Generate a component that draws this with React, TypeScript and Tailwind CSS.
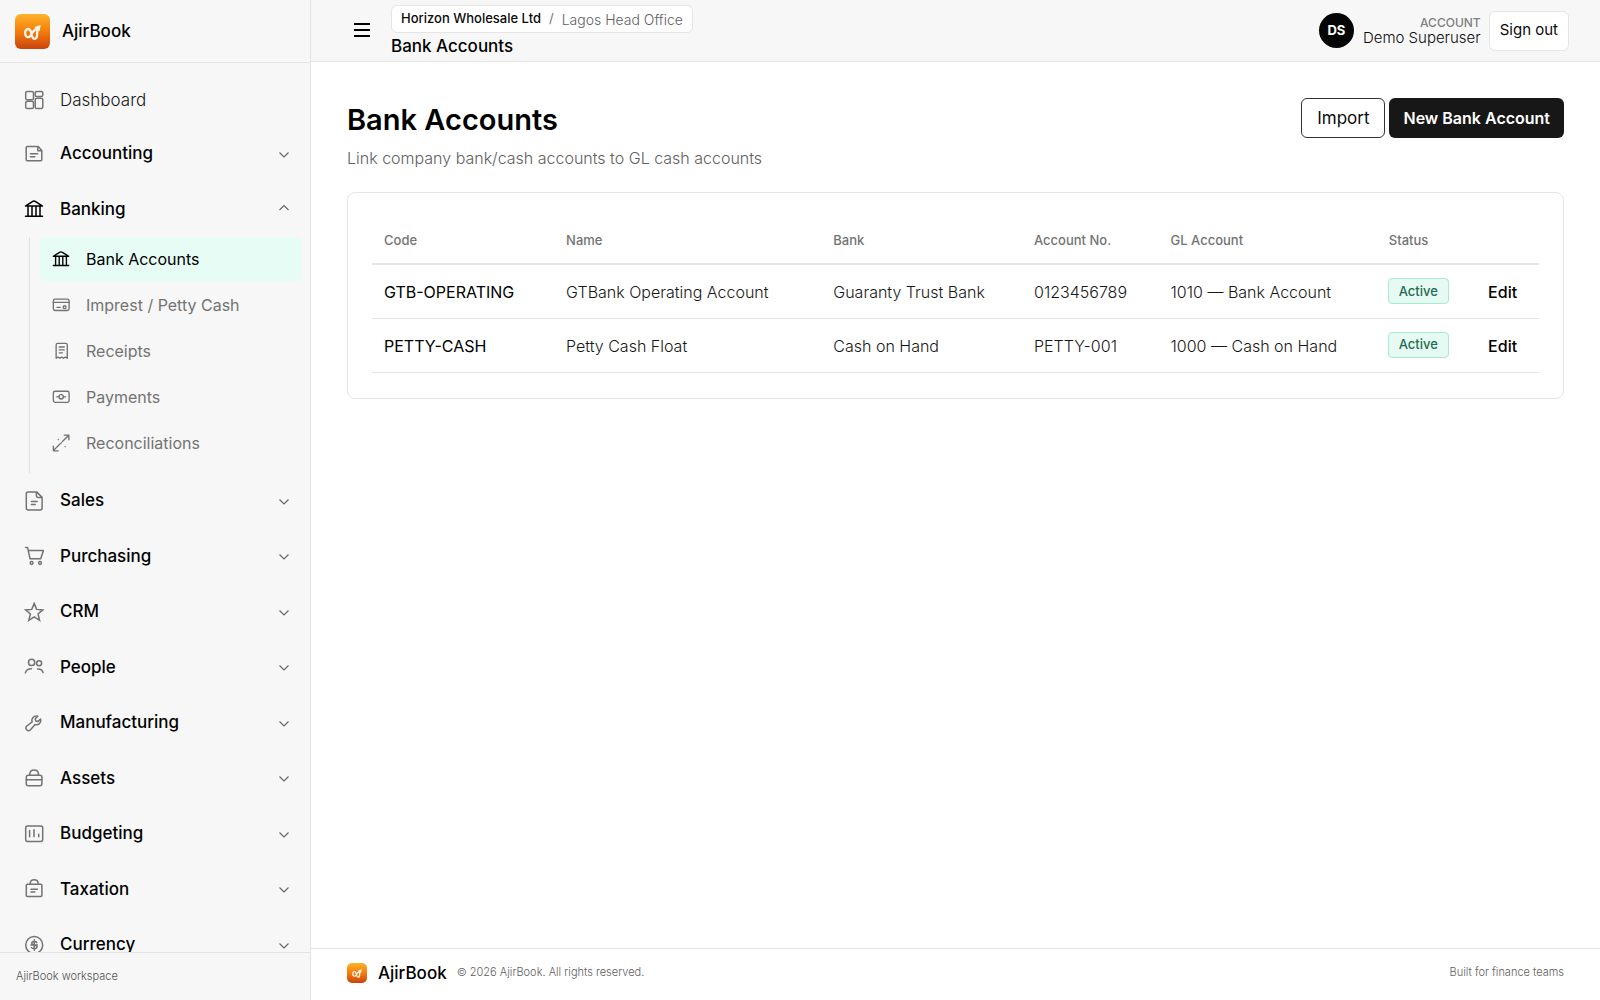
import type { ReactNode } from "react";

function Icon({ children, small }: { children: ReactNode; small?: boolean }) {
  return (
    <svg
      viewBox="0 0 20 20"
      className={small ? "size-[18px] shrink-0" : "size-5 shrink-0"}
      fill="none"
      stroke="currentColor"
      strokeWidth="1.5"
      strokeLinecap="round"
      strokeLinejoin="round"
      aria-hidden="true"
    >
      {children}
    </svg>
  );
}

const icons: Record<string, ReactNode> = {
  dashboard: (
    <>
      <rect x="1.7" y="1.5" width="7.8" height="8.3" rx="1.6" />
      <rect x="1.7" y="11.2" width="7.8" height="7.3" rx="1.6" />
      <rect x="11.2" y="1.5" width="7.6" height="5" rx="1.6" />
      <rect x="11.2" y="8.2" width="7.6" height="10.3" rx="1.6" />
    </>
  ),
  accounting: (
    <path d="M14.2 2.6H3.2q-1 0-1 1v12.2q0 1 1 1h13.6q1 0 1-1V6.4zM13.8 2.9v3.8h3.8M6.4 9.7h7.2M6.4 12.7h4.4" />
  ),
  bank: (
    <path d="M1.8 6.8 8.4 2.6Q10 1.6 11.6 2.6L18.2 6.8M1.5 6.9h17M1.5 17.2h17M4 7v10M8 7v10M12 7v10M16 7v10" />
  ),
  sales: (
    <path d="M12.6 .9H4.2Q2.3 .9 2.3 2.8v14.2q0 1.9 1.9 1.9h12q1.9 0 1.9-1.9V6.4zM12.4 1.2v3.6q0 1.6 1.6 1.6h3.8M7.4 10.4h5.8M7.4 13.5h3.8" />
  ),
  purchasing: (
    <>
      <path d="M1.6 1.6h2l2.5 11.2h10.6L19.4 4.6H4.4" />
      <circle cx="7.6" cy="17" r="1.4" />
      <circle cx="16" cy="17" r="1.4" />
    </>
  ),
  crm: <path d="m10.2 1.4 2.4 6 6.2.5-4.8 4 1.6 6.4-5.4-3.4-5.4 3.4 1.6-6.4-4.8-4 6.2-.5z" strokeLinejoin="miter" />,
  people: (
    <>
      <circle cx="7.6" cy="5.4" r="3.1" />
      <circle cx="15.1" cy="6.2" r="2.5" />
      <path d="M1.4 15.8q1-4 6-4.1M13.6 12q4.4-.2 5.5 3.6" />
    </>
  ),
  manufacturing: (
    <path d="M13.8 3.3a4.3 4.3 0 0 0-5.6 5.5L2.8 13a2.6 2.6 0 0 0 3.7 3.8l4.6-5.3a4.3 4.3 0 0 0 5.4-5.5l-2.5 2.4-2.3-.5-.5-2.2z" />
  ),
  assets: (
    <>
      <rect x="2.3" y="7.3" width="15.6" height="10.5" rx="2" />
      <path d="M2.3 11.7h15.6M5.8 7V5.7q.4-3.8 4.3-3.8T14.4 5.7V7" />
    </>
  ),
  budgeting: (
    <>
      <rect x="1.7" y="2" width="17" height="15.4" rx="1.8" />
      <path d="M5.6 6.4v6.4M10 5.8v7M14.7 10.2v2.6" />
    </>
  ),
  taxation: (
    <>
      <rect x="2.3" y="5.2" width="15.6" height="12.2" rx="1" />
      <path d="M6.2 5V4.2q.3-3.4 4-3.4t4 3.4V5M7 10.2h6.4M7 13.1h3.8" />
    </>
  ),
  currency: (
    <>
      <circle cx="10.2" cy="10" r="8.5" />
      <path d="M12.8 7.6q-.6-1-2.4-1-2.6 0-2.6 1.6 0 1.4 2.5 1.8 2.7.4 2.7 2t-2.7 1.7q-2 0-2.8-1.1M10.3 4.8v10.4M7 10h6.4" />
    </>
  ),
  card: (
    <>
      <rect x="1.5" y="3.5" width="17.5" height="12.6" rx="2" />
      <path d="M1.5 7h17.5M5.5 12.6h3.6" />
      <circle cx="14" cy="12.4" r="1.6" />
    </>
  ),
  receipt: (
    <path d="M4.6 18V3.2q0-1.6 1.6-1.6h9.2q1.6 0 1.6 1.6V18l-2.1-1.2L12.8 18l-2-1.2L8.7 18l-2.1-1.2zM8 5.6h5.6M8 8.8h5.6M8 12h3.6" />
  ),
  cash: (
    <>
      <rect x="1.5" y="3.6" width="17.5" height="12.4" rx="2" />
      <circle cx="10.2" cy="9.8" r="2.4" />
      <path d="M5.3 9.8h2.3M12.9 9.8h2.3" />
    </>
  ),
  reconcile: (
    <path d="M11.6 8.4 18.6 1.4M13.5 1.2h5.3v5.3M8.8 11.2l-7 7M6.8 18.7H1.5v-5.3M9.8 10.4l.7-.8M7 6v.1M14.6 14v.1" />
  ),
};

function Logo({ small }: { small?: boolean }) {
  const id = small ? "mark-small" : "mark";
  return (
    <svg viewBox="0 0 105 105" className={small ? "size-5 shrink-0" : "size-[35px] shrink-0"} aria-hidden="true">
      <defs>
        <linearGradient id={id} x1="0" y1="0" x2="0" y2="1">
          <stop offset="0" stopColor="#fdb32c" />
          <stop offset="0.5" stopColor="#f57c0b" />
          <stop offset="1" stopColor="#c9430c" />
        </linearGradient>
      </defs>
      <rect width="105" height="105" rx={small ? 26 : 18} fill={`url(#${id})`} />
      <path
        d="M47 65C41 72 33 70 31 62C28 52 33 45 40 45C48 45 48 56 51 66C54 77 65 77 66 66C66 58 66 50 70 43M47 65C50 56 56 49 68 43"
        fill="none"
        stroke="#fff4e8"
        strokeWidth="7"
        strokeLinecap="round"
        strokeLinejoin="round"
      />
      <path d="M77 33 58 39 74 52z" fill="#fff4e8" />
    </svg>
  );
}

function Chevron({ open }: { open?: boolean }) {
  return (
    <svg
      viewBox="0 0 12 12"
      className="ml-auto size-3 shrink-0 text-[#666]"
      fill="none"
      stroke="currentColor"
      strokeWidth="1.2"
      aria-hidden="true"
    >
      <path d={open ? "M1.5 7 6 2.6 10.5 7" : "M1.5 4.5 6 8.9 10.5 4.5"} />
    </svg>
  );
}

function NavGroup({ icon, label, open }: { icon: string; label: string; open?: boolean }) {
  return (
    <button
      type="button"
      aria-expanded={!!open}
      className="flex w-full items-center gap-4 py-[15px] pr-5 pl-6 text-left text-[17px] leading-normal font-medium text-black"
    >
      <span className={open ? "text-black" : "text-[#737373]"}>
        <Icon>{icons[icon]}</Icon>
      </span>
      {label}
      <Chevron open={open} />
    </button>
  );
}

const subItems = [
  { icon: "bank", label: "Bank Accounts", active: true },
  { icon: "card", label: "Imprest / Petty Cash" },
  { icon: "receipt", label: "Receipts" },
  { icon: "cash", label: "Payments" },
  { icon: "reconcile", label: "Reconciliations" },
];

const groups = [
  { icon: "sales", label: "Sales" },
  { icon: "purchasing", label: "Purchasing" },
  { icon: "crm", label: "CRM" },
  { icon: "people", label: "People" },
  { icon: "manufacturing", label: "Manufacturing" },
  { icon: "assets", label: "Assets" },
  { icon: "budgeting", label: "Budgeting" },
  { icon: "taxation", label: "Taxation" },
  { icon: "currency", label: "Currency" },
];

const accounts = [
  ["GTB-OPERATING", "GTBank Operating Account", "Guaranty Trust Bank", "0123456789", "1010 — Bank Account"],
  ["PETTY-CASH", "Petty Cash Float", "Cash on Hand", "PETTY-001", "1000 — Cash on Hand"],
];

function Sidebar() {
  return (
    <aside className="flex w-[311px] shrink-0 flex-col border-r border-[#e2e2e2] bg-[#f7f7f7]">
      <div className="flex h-[63px] shrink-0 items-center gap-3 border-b border-[#e5e5e5] pr-4 pl-[15px]">
        <Logo />
        <span className="pt-0.5 text-[17px] font-medium text-black">AjirBook</span>
      </div>
      <nav className="min-h-0 flex-1 overflow-x-hidden overflow-y-auto pt-[11px] [scrollbar-width:none]" aria-label="Main">
        <a href="#dashboard" className="flex items-center gap-4 py-[14px] pr-5 pl-6 text-[17px] leading-6 font-light text-[#171717]">
          <span className="text-[#737373]">
            <Icon>{icons.dashboard}</Icon>
          </span>
          Dashboard
        </a>
        <NavGroup icon="accounting" label="Accounting" />
        <NavGroup icon="bank" label="Banking" open />
        <div className="mr-2 ml-[29px] flex flex-col gap-0.5 border-l border-[#e2e2e2] pb-2 pl-[10px]">
          {subItems.map((s) => (
            <a
              key={s.label}
              href={"#" + s.icon}
              className={
                s.active
                  ? "flex items-center gap-4 rounded bg-[#e6fcf5] py-[10px] pl-3 text-[16px] leading-6 text-black"
                  : "flex items-center gap-4 rounded py-[10px] pl-3 text-[16px] leading-6 text-[#737373]"
              }
            >
              <Icon small>{icons[s.icon]}</Icon>
              {s.label}
            </a>
          ))}
        </div>
        {groups.map((g) => (
          <NavGroup key={g.label} icon={g.icon} label={g.label} />
        ))}
      </nav>
      <div className="flex h-12 shrink-0 items-center border-t border-[#e2e2e2] px-4 text-[11px] font-light text-[#525252]">
        AjirBook workspace
      </div>
    </aside>
  );
}

function Topbar() {
  return (
    <header className="flex h-[62px] shrink-0 items-center border-b border-[#e5e5e5] bg-[#f7f7f7] pr-[31px] pl-[43px]">
      <button type="button" aria-label="Toggle menu" className="mr-[21px] mb-0.5 flex w-4 flex-col gap-1">
        <span className="h-0.5 bg-black" />
        <span className="h-0.5 bg-black" />
        <span className="h-0.5 bg-black" />
      </button>
      <div className="flex flex-col items-start gap-px pt-0.5">
        <div className="flex h-7 items-center gap-2 rounded-md border border-[#e5e5e5] bg-white px-[9px] text-[13px]">
          <span className="font-medium">Horizon Wholesale Ltd</span>
          <span className="text-[#737373]">/</span>
          <span className="text-[14px] font-light text-[#606060]">Lagos Head Office</span>
        </div>
        <div className="text-[17px] leading-6 font-medium text-black">Bank Accounts</div>
      </div>
      <div className="ml-auto flex items-center">
        <div className="mr-[9px] flex size-[35px] items-center justify-center rounded-full bg-[#050505] text-[13px] font-bold text-white">
          DS
        </div>
        <div className="mr-2 text-right">
          <div className="text-[12px] leading-[14px] font-medium text-[#808080]">ACCOUNT</div>
          <div className="text-[15px] leading-4 font-light">Demo Superuser</div>
        </div>
        <button type="button" className="h-10 rounded-md border border-[#e5e5e5] bg-white px-[10px] text-[15px]">
          Sign out
        </button>
      </div>
    </header>
  );
}

export default function App() {
  return (
    <div className="flex h-screen bg-white font-['Inter',sans-serif] text-[#0a0a0a]">
      <Sidebar />
      <div className="flex min-w-0 flex-1 flex-col">
        <Topbar />
        <main className="flex-1 overflow-auto px-9 pt-9">
          <div className="flex items-start justify-between">
            <div>
              <h1 className="pt-0.5 text-[29px] leading-10 font-semibold text-black">Bank Accounts</h1>
              <p className="mt-1.5 text-[16px] leading-6 font-light text-[#606060]">
                Link company bank/cash accounts to GL cash accounts
              </p>
            </div>
            <div className="flex gap-1">
              <button type="button" className="h-10 rounded-md border border-[#333] bg-white px-[15px] pt-0.5 text-[17px]">
                Import
              </button>
              <button type="button" className="h-10 rounded-md bg-[#171717] px-[14px] text-[16px] font-semibold text-white">
                New Bank Account
              </button>
            </div>
          </div>
          <section className="mt-[22px] rounded-lg border border-[#e5e5e5] px-6 pt-6 pb-[25px]">
            <table className="w-full table-fixed border-collapse text-left text-[15px]">
              <colgroup>
                <col className="w-[15.6%]" />
                <col className="w-[22.9%]" />
                <col className="w-[17.2%]" />
                <col className="w-[11.7%]" />
                <col className="w-[18.7%]" />
                <col className="w-[8.6%]" />
                <col className="w-[5.3%]" />
              </colgroup>
              <thead>
                <tr className="h-[47px] border-b-2 border-[#e5e5e5] text-[13px] text-[#737373]">
                  {["Code", "Name", "Bank", "Account No.", "GL Account", "Status"].map((h) => (
                    <th key={h} className="px-3 pt-0.5 font-medium whitespace-nowrap">
                      {h}
                    </th>
                  ))}
                  <th aria-label="Actions" />
                </tr>
              </thead>
              <tbody>
                {accounts.map((row) => (
                  <tr key={row[0]} className="h-[54px] border-b border-[#e5e5e5]">
                    {row.map((cell, i) => (
                      <td
                        key={cell}
                        className={
                          i === 0
                            ? "px-3 pt-0.5 text-[16px] whitespace-nowrap text-black"
                            : "px-3 pt-0.5 text-[16px] font-light whitespace-nowrap text-[#171717]"
                        }
                      >
                        {cell}
                      </td>
                    ))}
                    <td className="px-[11px]">
                      <span className="inline-flex h-[26px] items-center rounded border border-[#a7ebd0] bg-[#e6faf3] px-[10px] text-[13px] font-medium text-[#1f6b52]">
                        Active
                      </span>
                    </td>
                    <td className="px-[11px] pt-0.5">
                      <a href="#edit" className="text-[16px] font-medium text-black">
                        Edit
                      </a>
                    </td>
                  </tr>
                ))}
              </tbody>
            </table>
          </section>
        </main>
        <footer className="flex h-[52px] shrink-0 items-center border-t border-[#e5e5e5] px-9 pb-1 text-[11px] font-light text-[#606060]">
          <Logo small />
          <span className="mr-[10px] ml-[11px] pt-0.5 text-[17px] font-medium text-black">AjirBook</span>
          <span>© 2026 AjirBook. All rights reserved.</span>
          <span className="ml-auto">Built for finance teams</span>
        </footer>
      </div>
    </div>
  );
}
